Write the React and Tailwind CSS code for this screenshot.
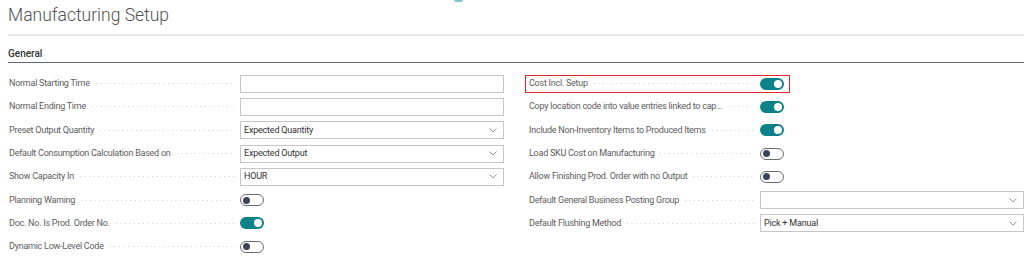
import React from "react";

function Chevron() {
  return (
    <svg width="8" height="5" viewBox="0 0 8 5" className="mr-[6px] shrink-0">
      <path d="M0.5 0.5 L4 4 L7.5 0.5" fill="none" stroke="#8a8a8a" strokeWidth="0.9" />
    </svg>
  );
}

function Toggle({ on }) {
  if (on) {
    return (
      <div className="w-[24px] h-[12px] rounded-full bg-[#0a8288] flex items-center justify-end pr-[2px]">
        <div className="w-[8px] h-[8px] rounded-full bg-white" />
      </div>
    );
  }
  return (
    <div className="w-[24px] h-[12px] rounded-full border border-[#6b6b6b] bg-white flex items-center pl-[2px]">
      <div className="w-[7px] h-[7px] rounded-full bg-[#3b4557]" />
    </div>
  );
}

function Input({ value, select }) {
  return (
    <div className="w-[264px] h-[18px] border border-[#c6c6c6] bg-white flex items-center justify-between pl-[3px]">
      <span className="text-[9px] tracking-[-0.2px] text-[#333333] leading-none whitespace-nowrap">{value}</span>
      {select ? <Chevron /> : null}
    </div>
  );
}

function Row({ label, children, highlight }) {
  return (
    <div className="relative flex items-center h-[23.3px]">
      {highlight ? (
        <div className="absolute left-[-3px] top-[2.7px] w-[265px] h-[18px] border border-[#e0262b]" />
      ) : null}
      <div className="w-[232px] flex items-center shrink-0">
        <span className="text-[9px] tracking-[-0.25px] text-[#5c5c5c] whitespace-nowrap leading-none pl-[1px]">{label}</span>
        <div className="flex-1 ml-[6px] mr-[6px] h-px bg-[linear-gradient(to_right,#c8c8c8_1px,transparent_1px)] bg-[length:4.5px_1px] bg-repeat-x" />
      </div>
      {children}
    </div>
  );
}

export default function App() {
  return (
    <div className="relative w-[1024px] h-[263px] bg-white overflow-hidden font-['Roboto',sans-serif]">
      <div className="absolute left-[454px] top-0 w-[9px] h-[2px] rounded-b-full bg-[#7fc7cb]" />
      <div className="pl-2">
        <h1 className="h-[34px] pt-[3px] text-[17.5px] font-light text-[#505050] leading-[24px]">
          Manufacturing Setup
        </h1>
        <div className="h-[2px] bg-[#e6e6e6]" />
        <div className="h-[27px] flex items-end pb-[3px] border-b border-[#5f6b7a]">
          <span className="text-[10px] font-medium text-[#333333] leading-none">General</span>
        </div>
        <div className="grid grid-cols-[496px_496px] gap-x-6 pt-[9px]">
          <div className="flex flex-col">
            <Row label="Normal Starting Time"><Input value="" /></Row>
            <Row label="Normal Ending Time"><Input value="" /></Row>
            <Row label="Preset Output Quantity"><Input value="Expected Quantity" select /></Row>
            <Row label="Default Consumption Calculation Based on"><Input value="Expected Output" select /></Row>
            <Row label="Show Capacity In"><Input value="HOUR" select /></Row>
            <Row label="Planning Warning"><Toggle on={false} /></Row>
            <Row label="Doc. No. Is Prod. Order No."><Toggle on /></Row>
            <Row label="Dynamic Low-Level Code"><Toggle on={false} /></Row>
          </div>
          <div className="flex flex-col">
            <Row label="Cost Incl. Setup" highlight><Toggle on /></Row>
            <Row label="Copy location code into value entries linked to cap..."><Toggle on /></Row>
            <Row label="Include Non-Inventory Items to Produced Items"><Toggle on /></Row>
            <Row label="Load SKU Cost on Manufacturing"><Toggle on={false} /></Row>
            <Row label="Allow Finishing Prod. Order with no Output"><Toggle on={false} /></Row>
            <Row label="Default General Business Posting Group"><Input value="" select /></Row>
            <Row label="Default Flushing Method"><Input value="Pick + Manual" select /></Row>
          </div>
        </div>
      </div>
    </div>
  );
}
